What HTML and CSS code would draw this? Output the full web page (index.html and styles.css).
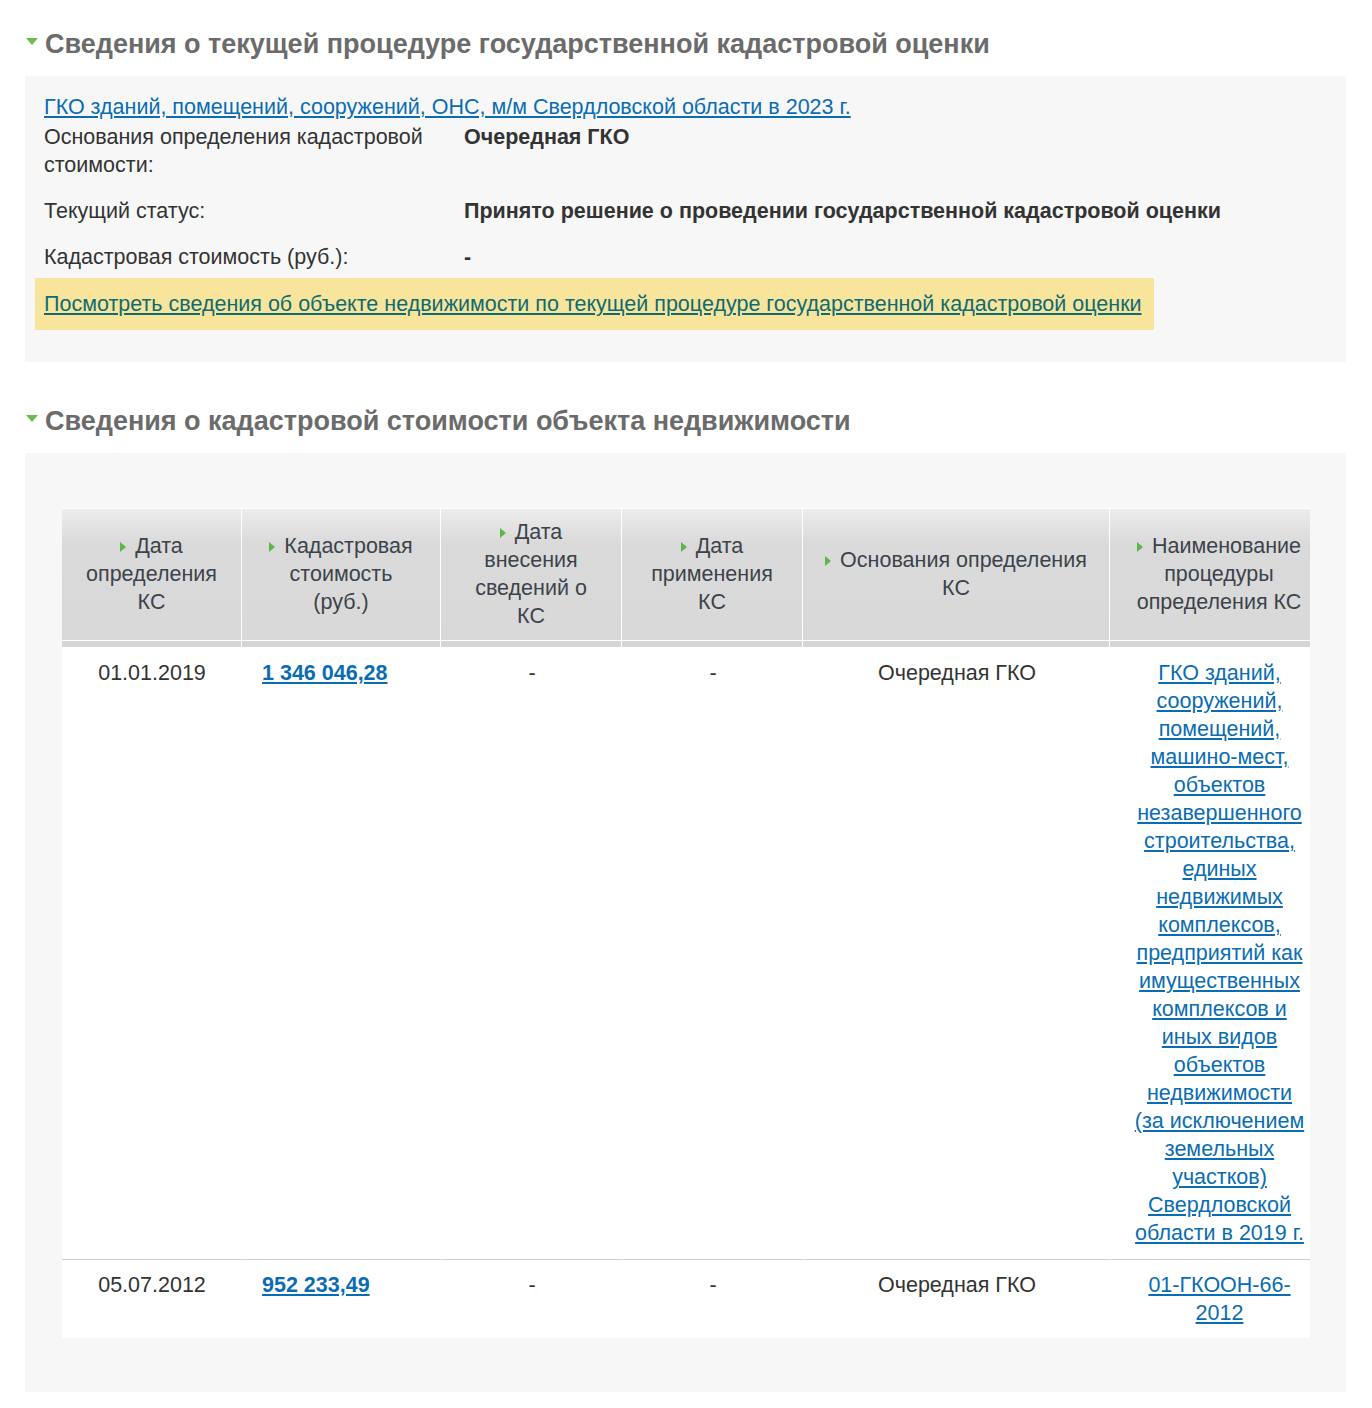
FILE: index.html
```html
<!DOCTYPE html>
<html lang="ru">
<head>
<meta charset="utf-8">
<title>Сведения о кадастровой стоимости</title>
<link rel="stylesheet" href="styles.css">
</head>
<body>
<div class="page">
  <h2 class="sec-title"><span class="tri-down"></span>Сведения о текущей процедуре государственной кадастровой оценки</h2>
  <div class="box box-current">
    <a class="link" href="#">ГКО зданий, помещений, сооружений, ОНС, м/м Свердловской области в 2023 г.</a>
    <div class="rows">
      <div class="row"><div class="lbl">Основания определения кадастровой стоимости:</div><div class="val">Очередная ГКО</div></div>
      <div class="row"><div class="lbl">Текущий статус:</div><div class="val">Принято решение о проведении государственной кадастровой оценки</div></div>
      <div class="row"><div class="lbl">Кадастровая стоимость (руб.):</div><div class="val">-</div></div>
    </div>
    <div class="notice"><a href="#">Посмотреть сведения об объекте недвижимости по текущей процедуре государственной кадастровой оценки</a></div>
  </div>

  <h2 class="sec-title sec-title-2"><span class="tri-down"></span>Сведения о кадастровой стоимости объекта недвижимости</h2>
  <div class="box box-table">
    <div class="table-wrap">
      <table class="ks">
        <colgroup>
          <col class="c1"><col class="c2"><col class="c3"><col class="c4"><col class="c5"><col class="c6">
        </colgroup>
        <thead>
          <tr>
            <th><span class="tri-right"></span>Дата определения КС</th>
            <th><span class="tri-right"></span>Кадастровая стоимость (руб.)</th>
            <th><span class="tri-right"></span>Дата внесения сведений о КС</th>
            <th><span class="tri-right"></span>Дата применения КС</th>
            <th class="wide"><span class="tri-right"></span>Основания определения КС</th>
            <th><span class="tri-right"></span>Наименование процедуры определения КС</th>
          </tr>
        </thead>
        <tbody>
          <tr>
            <td>01.01.2019</td>
            <td class="left"><a class="sum" href="#">1 346 046,28</a></td>
            <td>-</td>
            <td>-</td>
            <td>Очередная ГКО</td>
            <td class="proc"><a class="link" href="#">ГКО зданий, сооружений, помещений, машино-мест, объектов незавершенного строительства, единых недвижимых комплексов, предприятий как имущественных комплексов и иных видов объектов недвижимости (за исключением земельных участков) Свердловской области в 2019 г.</a></td>
          </tr>
          <tr>
            <td>05.07.2012</td>
            <td class="left"><a class="sum" href="#">952 233,49</a></td>
            <td>-</td>
            <td>-</td>
            <td>Очередная ГКО</td>
            <td class="proc"><a class="link" href="#">01-ГКООН-66-2012</a></td>
          </tr>
        </tbody>
      </table>
    </div>
  </div>
</div>
</body>
</html>
```

FILE: styles.css
```css
html, body {
  margin: 0;
  padding: 0;
  background: #fff;
}
body {
  font-family: "Liberation Sans", Arial, sans-serif;
  font-size: 21.5px;
  line-height: 28px;
  color: #333;
}
.page {
  padding: 30px 26px 16px 25px;
}
.sec-title {
  margin: 0 0 18px 0;
  font-size: 27px;
  line-height: 28px;
  font-weight: bold;
  color: #6b6b6b;
  display: flex;
  align-items: center;
}
.sec-title-2 {
  margin-top: 45px;
}
.tri-down {
  display: inline-block;
  width: 0;
  height: 0;
  border-left: 6px solid transparent;
  border-right: 6px solid transparent;
  border-top: 7px solid #6cbd4c;
  margin: 0 7px 0 1px;
  position: relative;
  top: -3px;
}
.box {
  background: #f7f7f7;
}
.box-current {
  padding: 17px 26px 32px 10px;
}
.link {
  color: #0a6db3;
  text-decoration: underline;
}
.box-current > .link {
  display: block;
  padding: 0 9px;
}
.rows {
  display: flex;
  flex-direction: column;
  gap: 18px;
  margin-top: 2px;
}
.row {
  display: grid;
  grid-template-columns: 420px 1fr;
}
.lbl {
  padding: 0 9px;
  color: #333;
}
.val {
  padding: 0 9px;
  font-weight: bold;
  color: #333;
}
.notice {
  display: inline-block;
  margin-top: 7px;
  background: #f8e59b;
  padding: 12px 12px 12px 9px;
}
.notice a {
  color: #0e6b74;
  text-decoration: underline;
}
.box-table {
  padding: 55px 36px 54px 37px;
}
.table-wrap {
  width: 1248px;
  overflow: hidden;
  background: #fff;
}
.ks {
  width: 1266px;
  table-layout: fixed;
  border-collapse: separate;
  border-spacing: 0;
  background: #fff;
}
.c1 { width: 180px; }
.c2 { width: 199px; }
.c3 { width: 181px; }
.c4 { width: 181px; }
.c5 { width: 307px; }
.c6 { width: 218px; }
.ks th {
  font-weight: normal;
  color: #3c434b;
  text-align: center;
  vertical-align: middle;
  padding: 9px 20px 17px 20px;
  border-top: 1px solid #fff;
  border-right: 1px solid #fff;
  background: linear-gradient(to bottom,
    #ececec 0,
    #dadada 34px,
    #d9d9d9 calc(100% - 7px),
    #ffffff calc(100% - 7px),
    #ffffff calc(100% - 6px),
    #d5d5d5 calc(100% - 6px),
    #d5d5d5 100%);
}
.ks th.wide {
  padding-left: 10px;
  padding-right: 10px;
}
.ks th:last-child {
  border-right: none;
}
.tri-right {
  display: inline-block;
  width: 0;
  height: 0;
  border-top: 5px solid transparent;
  border-bottom: 5px solid transparent;
  border-left: 6px solid #5cb84a;
  margin-right: 9px;
  vertical-align: 1px;
}
.ks td {
  text-align: center;
  vertical-align: top;
  padding: 12px 6px 12px 6px;
  color: #333;
  border-left: 1px solid #fff;
}
.ks td:first-child {
  border-left: none;
}
.ks tbody tr + tr td {
  border-top: 1px solid #cfcfcf;
  padding-top: 11px;
  padding-bottom: 11px;
}
.ks td.left {
  text-align: left;
  padding-left: 19px;
}
.ks td.proc {
  padding-left: 20px;
  padding-right: 20px;
}
.sum {
  font-weight: bold;
  color: #0a6db3;
  text-decoration: underline;
}
```
